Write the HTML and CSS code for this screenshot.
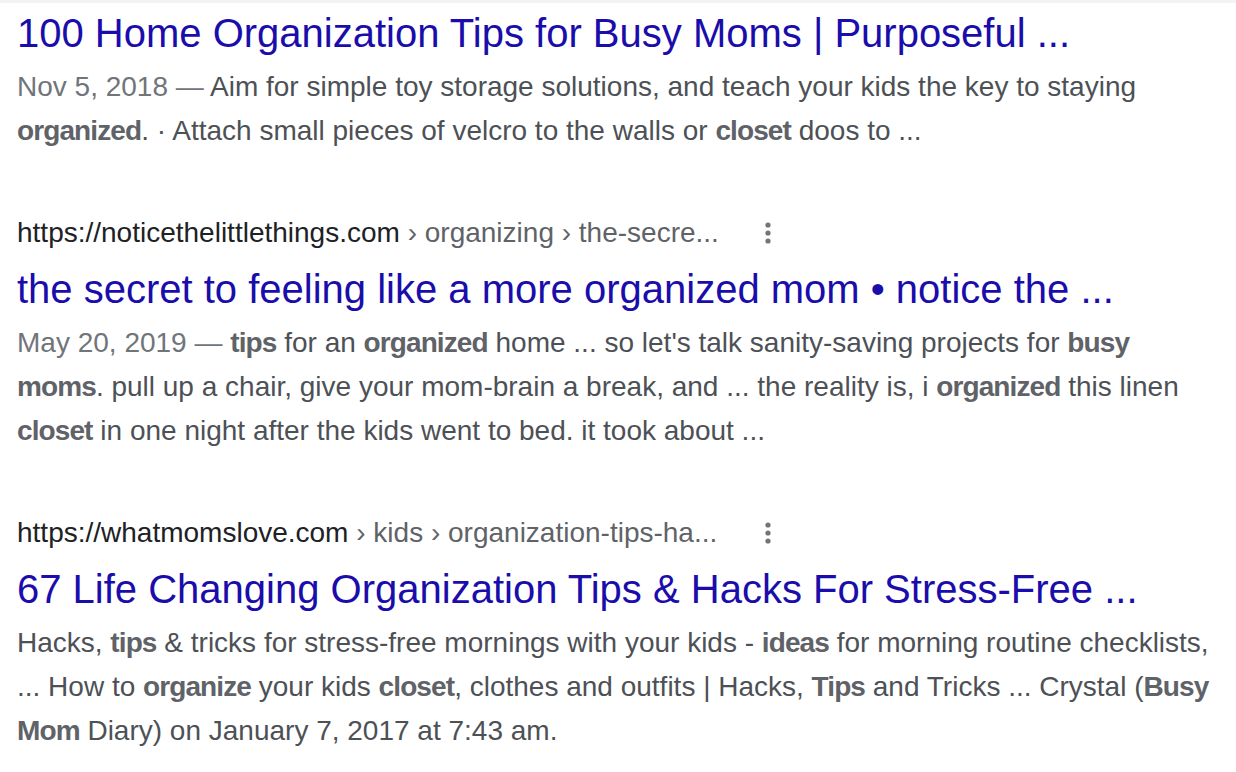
FILE: index.html
```html
<!DOCTYPE html>
<html lang="en">
<head>
    <meta charset="UTF-8">
    <title>organized closet tips - Search</title>
    <link rel="stylesheet" href="styles.css">
</head>
<body>
    <div class="topbar"></div>

    <div class="results">
        <div class="result first">
            <a class="title" href="#">100 Home Organization Tips for Busy Moms | Purposeful ...</a>
            <div class="snippet">
                <span class="date">Nov 5, 2018 — </span>Aim for simple toy storage solutions, and teach your kids the key to staying <b>organized</b>. · Attach small pieces of velcro to the walls or <b>closet</b> doos to ...
            </div>
        </div>

        <div class="result">
            <div class="url-row">
                <cite class="url">https://noticethelittlethings.com<span class="crumbs"> › organizing › the-secre...</span></cite>
                <span class="more">
                    <svg width="6" height="22" viewBox="0 0 6 22"><circle cx="3" cy="3" r="2.6"/><circle cx="3" cy="11" r="2.6"/><circle cx="3" cy="19" r="2.6"/></svg>
                </span>
            </div>
            <a class="title" href="#">the secret to feeling like a more organized mom • notice the ...</a>
            <div class="snippet">
                <span class="date">May 20, 2019 — </span><b>tips</b> for an <b>organized</b> home ... so let's talk sanity-saving projects for <b>busy moms</b>. pull up a chair, give your mom-brain a break, and ... the reality is, i <b>organized</b> this linen <b>closet</b> in one night after the kids went to bed. it took about ...
            </div>
        </div>

        <div class="result">
            <div class="url-row">
                <cite class="url">https://whatmomslove.com<span class="crumbs"> › kids › organization-tips-ha...</span></cite>
                <span class="more">
                    <svg width="6" height="22" viewBox="0 0 6 22"><circle cx="3" cy="3" r="2.6"/><circle cx="3" cy="11" r="2.6"/><circle cx="3" cy="19" r="2.6"/></svg>
                </span>
            </div>
            <a class="title" href="#">67 Life Changing Organization Tips &amp; Hacks For Stress-Free ...</a>
            <div class="snippet">
                Hacks, <b>tips</b> &amp; tricks for stress-free mornings with your kids - <b>ideas</b> for morning routine checklists, ... How to <b>organize</b> your kids <b>closet</b>, clothes and outfits | Hacks, <b>Tips</b> and Tricks ... Crystal (<b>Busy Mom</b> Diary) on January 7, 2017 at 7:43 am.
            </div>
        </div>
    </div>
</body>
</html>
```

FILE: styles.css
```css
body {
    margin: 0;
    font-family: "Liberation Sans", Arial, sans-serif;
    background: #ffffff;
    color: #4d5156;
}
.topbar {
    height: 3px;
    background: #f1f3f4;
}
.results {
    padding-left: 17px;
    width: 1200px;
}
.result {
    margin-bottom: 58px;
}
.result:last-child {
    margin-bottom: 0;
}
.url-row {
    display: flex;
    align-items: center;
    justify-content: space-between;
    width: 754px;
    height: 44px;
}
.url {
    font-style: normal;
    font-size: 28px;
    color: #202124;
    white-space: nowrap;
}
.crumbs {
    color: #5f6368;
}
.more {
    display: flex;
}
.more svg {
    fill: #70757a;
}
.title {
    display: block;
    margin-top: 6px;
    font-size: 40px;
    line-height: 56px;
    color: #1a0dab;
    text-decoration: none;
    white-space: nowrap;
}
.snippet {
    margin-top: 4px;
    font-size: 28px;
    line-height: 44px;
}
.first .title {
    margin-top: 2px;
}
.snippet b {
    color: #5f6368;
    letter-spacing: -0.9px;
}
.date {
    color: #70757a;
}
```
